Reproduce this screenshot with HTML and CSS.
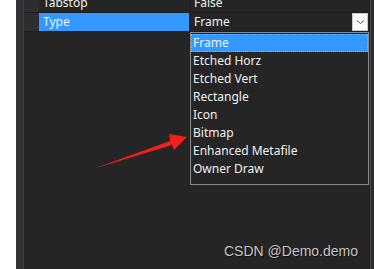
FILE: index.html
```html
<!DOCTYPE HTML>
<html>
<head>
<meta charset="utf-8">
<link rel="stylesheet" href="styles.css">
</head>
<body>
  <div id="pane">
    <div class="gutter"></div>
    <div class="grid">
        <div class="row first">
            <div class="cat"></div>
            <div class="name">Tabstop</div>
            <div class="value">False</div>
        </div>
        <div class="row">
            <div class="cat"></div>
            <div class="name sel">Type</div>
            <div class="value">Frame<span class="btn"><svg width="9" height="6" viewBox="0 0 9 6"><path d="M1 1.5 L4.5 4.5 L8 1.5" fill="none" stroke="#555" stroke-width="1"/></svg></span></div>
        </div>
    </div>
    <div class="scroll"></div>

    <ul class="list">
        <li class="on">Frame</li>
        <li>Etched Horz</li>
        <li>Etched Vert</li>
        <li>Rectangle</li>
        <li>Icon</li>
        <li>Bitmap</li>
        <li>Enhanced Metafile</li>
        <li>Owner Draw</li>
    </ul>

    <svg class="arrow" width="100" height="40" viewBox="0 0 100 40">
        <polygon points="0,37 77,9 76,2 94,5 81,18 79,13" fill="#f2201a"/>
    </svg>

    <div class="mark">CSDN @Demo.demo</div>
</div>
</body>
</html>
```

FILE: styles.css
```css
*{
    padding: 0px;
    margin: 0px;
    box-sizing: border-box;
}
body{
    background: #fff;
    width: 374px;
    height: 269px;
    overflow: hidden;
    font-family: "Noto Sans", "Noto Sans CJK SC", sans-serif;
    font-size: 12px;
    color: #f1f1f1;
}
#pane{
    position: relative;
    margin-left: 16px;
    height: 269px;
    background: #252526;
    display: flex;
}
#pane .gutter{
    width: 8px;
    background: #333337;
    border-right: 1px solid #3f3f46;
}
#pane .grid{
    flex: 1;
}
#pane .scroll{
    width: 4px;
    background: #2d2d30;
    border-left: 1px solid #46464c;
}
.row{
    display: flex;
    height: 19px;
    border-bottom: 1px solid #1e1e1e;
}
.row.first{
    margin-top: -6px;
}
.row .cat{
    width: 15px;
    background: #2d2d30;
}
.row .name{
    width: 151px;
    padding-left: 4px;
    line-height: 18px;
    border-right: 1px solid #1e1e1e;
}
.row .name.sel{
    background: #3399ff;
}
.row .value{
    flex: 1;
    position: relative;
    padding-left: 4px;
    line-height: 18px;
}
.row .value .btn{
    position: absolute;
    right: 2px;
    top: 0px;
    width: 16px;
    height: 18px;
    background: #fcfcfc;
    border: 1px solid #c8c8c8;
    display: flex;
    align-items: center;
    justify-content: center;
}
.list{
    position: absolute;
    left: 174px;
    top: 32px;
    width: 179px;
    height: 153px;
    list-style: none;
    background: #252526;
    border: 1px solid #8a8a8a;
    padding-top: 1px;
}
.list li{
    height: 18px;
    line-height: 18px;
    padding-left: 2px;
}
.list li.on{
    background: #3399ff;
    border: 1px dotted #e0a050;
    line-height: 16px;
    padding-left: 1px;
}
.arrow{
    position: absolute;
    left: 77px;
    top: 132px;
}
.mark{
    position: absolute;
    left: 208px;
    top: 243px;
    font-family: "Liberation Sans", Arial, sans-serif;
    font-size: 14px;
    color: #c4c4c4;
    text-shadow: 1px 1px 1px #111;
}
```
